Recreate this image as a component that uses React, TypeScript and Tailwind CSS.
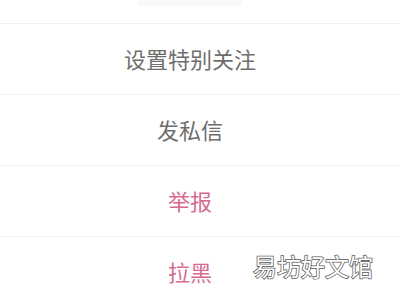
const items = [
  { label: '设置特别关注', danger: false },
  { label: '发私信', danger: false },
  { label: '举报', danger: true },
  { label: '拉黑', danger: true },
]

export default function App() {
  return (
    <div className="relative h-[300px] w-[400px] overflow-hidden bg-white font-['Noto_Sans_CJK_SC',sans-serif]">
      {/* cut-off row above */}
      <div className="flex h-[24px] justify-center border-b border-[#efefef] pr-[20px]">
        <div className="h-[6px] w-[105px] bg-[#f9f9f9]" />
      </div>

      {items.map((item) => (
        <div
          key={item.label}
          className="flex h-[71px] items-center justify-center border-b border-[#f0f0f0] pb-[2px] pr-[20px]"
        >
          <span
            className={`text-[22px] leading-none ${item.danger ? 'text-[#d56b90]' : 'text-[#6e6e6e]'}`}
          >
            {item.label}
          </span>
        </div>
      ))}

      {/* watermark */}
      <div className="absolute left-[253px] top-[254px] text-[24px] leading-none text-white [-webkit-text-stroke:1.5px_#555] [paint-order:stroke_fill]">
        易坊好文馆
      </div>
    </div>
  )
}
